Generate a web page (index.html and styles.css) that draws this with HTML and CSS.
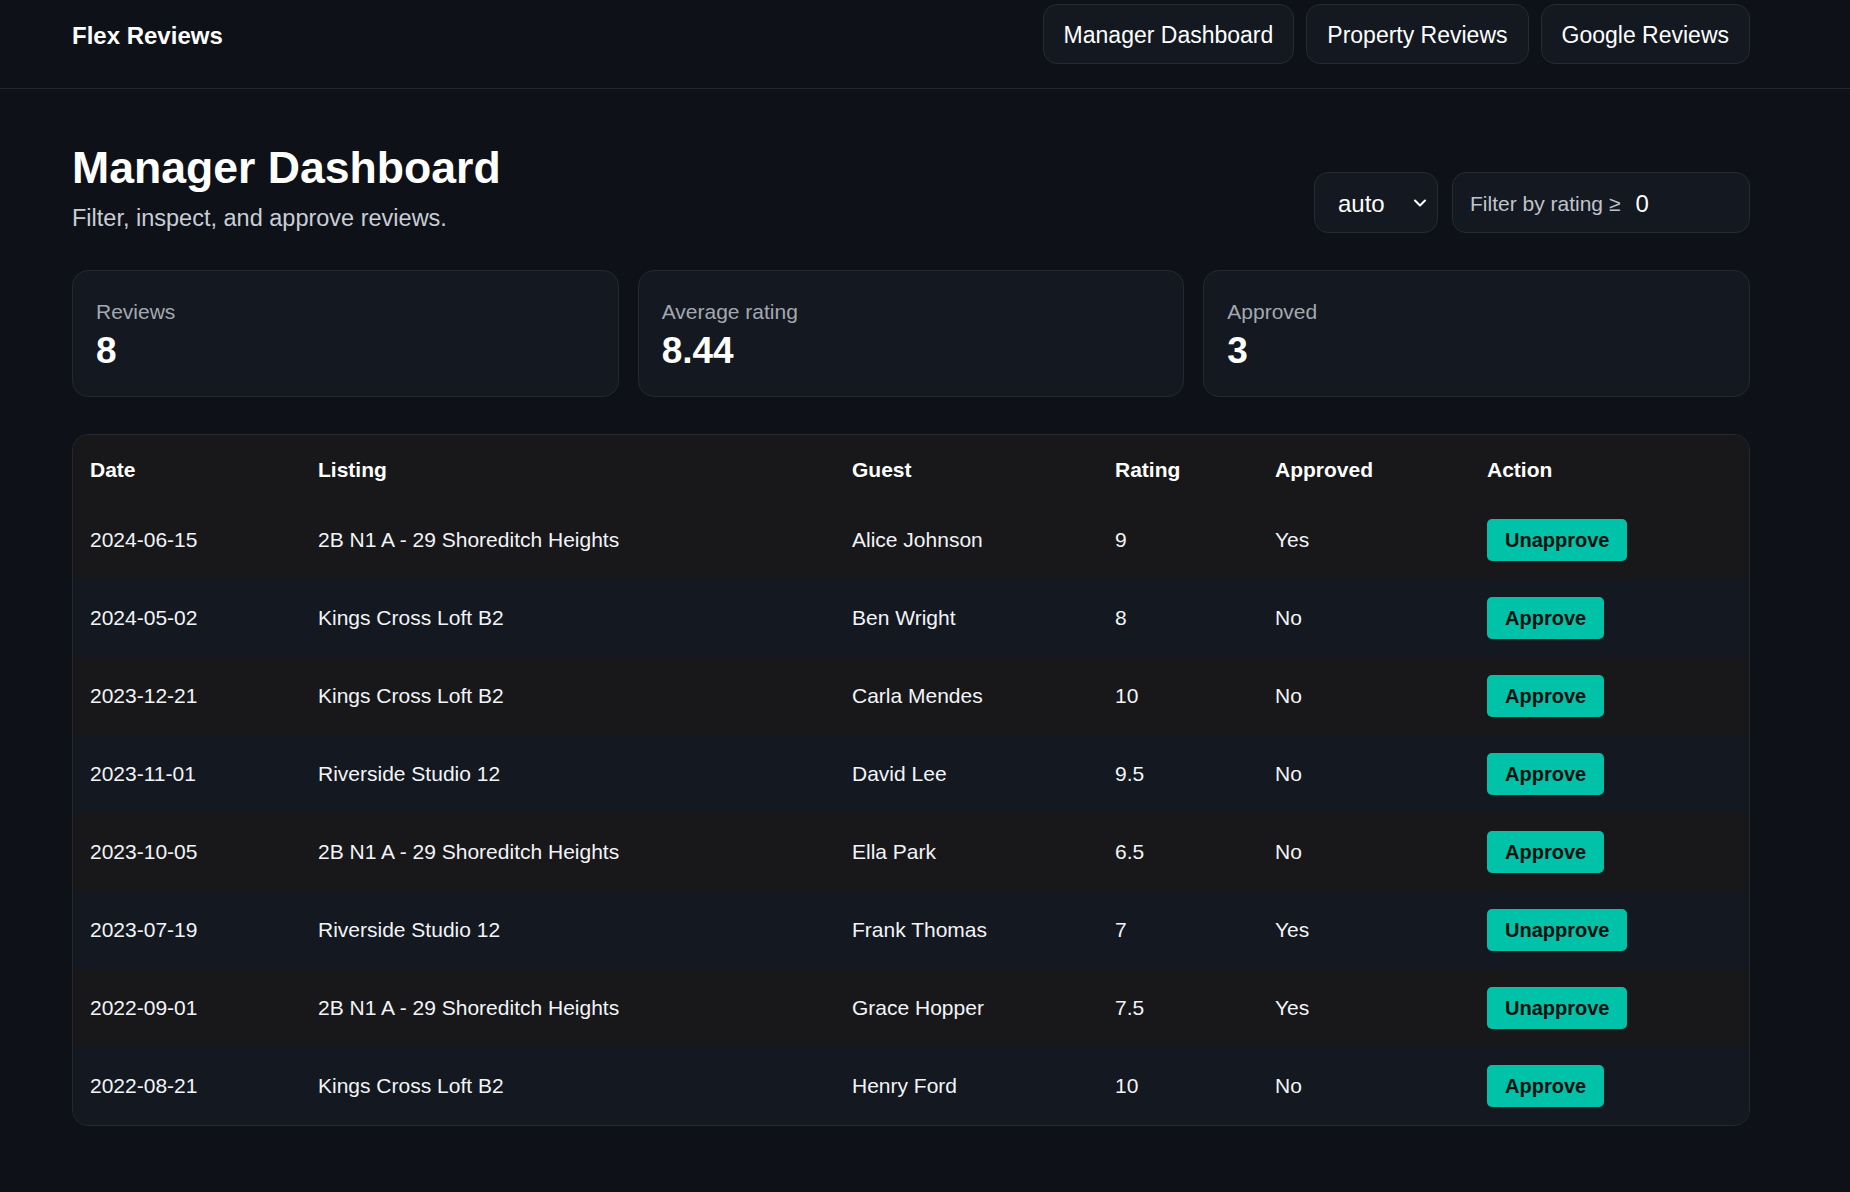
FILE: index.html
```html
<!DOCTYPE html>
<html lang="en">
<head>
<meta charset="utf-8">
<title>Flex Reviews</title>
<link rel="stylesheet" href="styles.css">
</head>
<body>
<header class="topbar">
  <div class="brand">Flex Reviews</div>
  <nav class="nav">
    <a class="nav-btn" href="#">Manager Dashboard</a>
    <a class="nav-btn" href="#">Property Reviews</a>
    <a class="nav-btn" href="#">Google Reviews</a>
  </nav>
</header>
<main class="main">
  <section class="title-row">
    <div class="title-block">
      <h1 class="title">Manager Dashboard</h1>
      <p class="subtitle">Filter, inspect, and approve reviews.</p>
    </div>
    <div class="controls">
      <div class="select">
        <span class="select-value">auto</span>
        <svg class="chevron" width="14" height="10" viewBox="0 0 14 10"><path d="M2 2.5 L7 7.5 L12 2.5" fill="none" stroke="#ffffff" stroke-width="2" stroke-linecap="round" stroke-linejoin="round"/></svg>
      </div>
      <label class="filter">
        <span class="filter-label">Filter by rating ≥</span>
        <span class="filter-value">0</span>
      </label>
    </div>
  </section>

  <section class="stats">
    <div class="stat">
      <div class="stat-label">Reviews</div>
      <div class="stat-value">8</div>
    </div>
    <div class="stat">
      <div class="stat-label">Average rating</div>
      <div class="stat-value">8.44</div>
    </div>
    <div class="stat">
      <div class="stat-label">Approved</div>
      <div class="stat-value">3</div>
    </div>
  </section>

  <section class="table-wrap">
    <table class="reviews">
      <colgroup>
        <col class="c-date"><col class="c-listing"><col class="c-guest"><col class="c-rating"><col class="c-approved"><col class="c-action">
      </colgroup>
      <thead>
        <tr><th>Date</th><th>Listing</th><th>Guest</th><th>Rating</th><th>Approved</th><th>Action</th></tr>
      </thead>
      <tbody>
        <tr><td>2024-06-15</td><td>2B N1 A - 29 Shoreditch Heights</td><td>Alice Johnson</td><td>9</td><td>Yes</td><td><button class="btn">Unapprove</button></td></tr>
        <tr><td>2024-05-02</td><td>Kings Cross Loft B2</td><td>Ben Wright</td><td>8</td><td>No</td><td><button class="btn">Approve</button></td></tr>
        <tr><td>2023-12-21</td><td>Kings Cross Loft B2</td><td>Carla Mendes</td><td>10</td><td>No</td><td><button class="btn">Approve</button></td></tr>
        <tr><td>2023-11-01</td><td>Riverside Studio 12</td><td>David Lee</td><td>9.5</td><td>No</td><td><button class="btn">Approve</button></td></tr>
        <tr><td>2023-10-05</td><td>2B N1 A - 29 Shoreditch Heights</td><td>Ella Park</td><td>6.5</td><td>No</td><td><button class="btn">Approve</button></td></tr>
        <tr><td>2023-07-19</td><td>Riverside Studio 12</td><td>Frank Thomas</td><td>7</td><td>Yes</td><td><button class="btn">Unapprove</button></td></tr>
        <tr><td>2022-09-01</td><td>2B N1 A - 29 Shoreditch Heights</td><td>Grace Hopper</td><td>7.5</td><td>Yes</td><td><button class="btn">Unapprove</button></td></tr>
        <tr><td>2022-08-21</td><td>Kings Cross Loft B2</td><td>Henry Ford</td><td>10</td><td>No</td><td><button class="btn">Approve</button></td></tr>
      </tbody>
    </table>
  </section>
</main>
</body>
</html>
```

FILE: styles.css
```css
* { box-sizing: border-box; }

body {
  margin: 0;
  background: #0e1118;
  color: #f2f4f7;
  font-family: "Liberation Sans", Arial, sans-serif;
}

.topbar {
  display: flex;
  justify-content: space-between;
  align-items: center;
  height: 89px;
  padding: 4px 100px 24px 72px;
  border-bottom: 1px solid #22252b;
}

.brand {
  font-size: 24px;
  font-weight: 700;
  color: #ffffff;
  line-height: 30px;
  margin-top: 3px;
}

.nav {
  display: flex;
  gap: 12px;
}

.nav-btn {
  display: flex;
  align-items: center;
  height: 60px;
  padding: 2px 20px 0;
  border: 1px solid #272a30;
  border-radius: 14px;
  background: #141820;
  color: #ffffff;
  font-size: 23px;
  text-decoration: none;
}

.main {
  padding: 0 100px 60px 72px;
}

.title-row {
  display: flex;
  justify-content: space-between;
  align-items: flex-end;
  margin-top: 53px;
}

.title {
  margin: 0;
  font-size: 44.6px;
  line-height: 52px;
  font-weight: 700;
  color: #ffffff;
}

.subtitle {
  margin: 9px 0 0;
  font-size: 23.5px;
  line-height: 30px;
  color: #c9ced6;
}

.controls {
  display: flex;
  gap: 14px;
}

.select {
  display: flex;
  align-items: center;
  justify-content: space-between;
  width: 124px;
  height: 61px;
  padding: 0 10px 0 23px;
  border: 1px solid #272a30;
  border-radius: 14px;
  background: #141820;
}

.select-value {
  font-size: 24px;
  color: #ffffff;
  margin-top: 2px;
}

.chevron { margin-top: 1px; }

.filter {
  display: flex;
  align-items: center;
  width: 298px;
  height: 61px;
  padding: 2px 17px 0;
  border: 1px solid #272a30;
  border-radius: 14px;
  background: #141820;
}

.filter-label {
  font-size: 21px;
  color: #bfc4cc;
}

.filter-value {
  margin-left: 15px;
  font-size: 24px;
  color: #ffffff;
}

.stats {
  display: grid;
  grid-template-columns: repeat(3, 1fr);
  gap: 19px;
  margin-top: 37px;
}

.stat {
  height: 127px;
  padding: 26px 23px 23px;
  border: 1px solid #25282e;
  border-radius: 16px;
  background: #141820;
}

.stat-label {
  font-size: 21px;
  line-height: 30px;
  color: #a3a8b0;
}

.stat-value {
  margin-top: 2px;
  font-size: 37px;
  line-height: 44px;
  font-weight: 700;
  color: #ffffff;
}

.table-wrap {
  margin-top: 37px;
  border: 1px solid #25282e;
  border-radius: 16px;
  overflow: hidden;
  background: #141820;
}

.reviews {
  width: 100%;
  border-collapse: collapse;
  table-layout: fixed;
  font-size: 21px;
  line-height: 30px;
}

.c-date { width: 228px; }
.c-listing { width: 534px; }
.c-guest { width: 263px; }
.c-rating { width: 160px; }
.c-approved { width: 212px; }
.c-action { width: 279px; }

.reviews th {
  text-align: left;
  font-weight: 700;
  color: #ffffff;
  padding: 20px 17px 16px;
  background: #18181a;
}

.reviews td {
  padding: 18px 17px;
  color: #f2f4f7;
  vertical-align: middle;
  white-space: nowrap;
}

.reviews tbody tr:nth-child(odd) td { background: #18181b; }
.reviews tbody tr:nth-child(even) td { background: #141820; }

.btn {
  height: 42px;
  padding: 0 18px;
  border: none;
  border-radius: 5px;
  background: #00c2a8;
  color: #06100e;
  font-family: "Liberation Sans", Arial, sans-serif;
  font-size: 20px;
  font-weight: 700;
  line-height: 42px;
  display: block;
}
```
